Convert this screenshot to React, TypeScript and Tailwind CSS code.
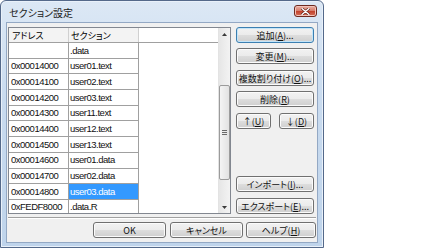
import React from 'react';
import clsx from 'clsx';

const rows: [string, string][] = [
  ['', '.data'],
  ['0x00014000', 'user01.text'],
  ['0x00014100', 'user02.text'],
  ['0x00014200', 'user03.text'],
  ['0x00014300', 'user11.text'],
  ['0x00014400', 'user12.text'],
  ['0x00014500', 'user13.text'],
  ['0x00014600', 'user01.data'],
  ['0x00014700', 'user02.data'],
  ['0x00014800', 'user03.data'],
  ['0xFEDF8000', '.data.R'],
];

const SELECTED = 9;

interface BtnProps {
  children: React.ReactNode;
  className?: string;
  primary?: boolean;
}

const Btn: React.FC<BtnProps> = ({ children, className, primary }) => (
  <div
    className={clsx(
      'flex h-[16px] shrink-0 items-center justify-center rounded-[3px] border text-[9px] leading-none text-[#111]',
      "font-['Noto_Sans_CJK_JP',sans-serif] [font-feature-settings:'palt']",
      'bg-[linear-gradient(to_bottom,#f2f2f2_0%,#ebebeb_50%,#dddddd_51%,#cfcfcf_100%)]',
      primary ? 'border-[#3c7fb1] shadow-[inset_0_0_0_1px_#c4e5f8]' : 'border-[#707070] shadow-[inset_0_0_0_1px_#fbfbfb]',
      className
    )}
  >
    {children}
  </div>
);

// underlined access key
const K: React.FC<{ c: string }> = ({ c }) => <span className="underline underline-offset-[1px]">{c}</span>;

const Arrow: React.FC<{ down?: boolean }> = ({ down }) => (
  <svg width="5" height="3" viewBox="0 0 5 3">
    <path d={down ? 'M0 0 H5 L2.5 3 Z' : 'M0 3 H5 L2.5 0 Z'} fill="#3a3a3a" />
  </svg>
);

const App: React.FC = () => {
  return (
    <div className="h-[250px] w-[434px] bg-white">
      <div className="flex h-[248px] w-[324px] flex-col rounded-t-[6px] border border-[#54698a] bg-[linear-gradient(to_bottom,#dce8f5_0%,#c9dbef_40%,#bfd4eb_100%)] shadow-[inset_0_0_0_1px_#e9f1fa]">
        {/* title bar */}
        <div className="flex h-[21px] shrink-0 items-center justify-between pl-[8px] pr-[6px]">
          <span className="pt-[2px] text-[10px] leading-none text-[#1b1b1b] font-['Noto_Sans_CJK_JP',sans-serif] [font-feature-settings:'palt']">
            セクション設定
          </span>
          <div className="mt-[-1px] flex h-[12px] w-[23px] items-center justify-center rounded-[3px] border border-[#6e2a20] bg-[linear-gradient(to_bottom,#eab0a4_0%,#d7806f_45%,#c4452f_55%,#d4705a_100%)] shadow-[inset_0_0_0_1px_#f1c2b8]">
            <svg width="9" height="7" viewBox="0 0 9 7">
              <path d="M1 0.5 L8 6.5 M8 0.5 L1 6.5" stroke="#5a1d14" strokeWidth="2.6" strokeLinecap="round" />
              <path d="M1 0.5 L8 6.5 M8 0.5 L1 6.5" stroke="#ffffff" strokeWidth="1.4" strokeLinecap="round" />
            </svg>
          </div>
        </div>

        {/* client area */}
        <div className="mx-[5px] flex h-[221px] shrink-0 flex-col border border-[#93a8c4] bg-[#f0f0f0] px-[1px] pt-[4px]">
          <div className="flex h-[187px] shrink-0">
            {/* list */}
            <div className="flex h-full w-[223px] shrink-0 border border-[#828790] bg-white">
              <div className="flex-1 overflow-hidden">
                <div className="flex h-[15px] border-b border-[#a0a0a0] text-[9px] leading-none font-['Noto_Sans_CJK_JP',sans-serif] [font-feature-settings:'palt']">
                  <div className="flex w-[60px] items-center border-r border-[#d0d0d0] bg-[#f3f3f3] pl-[3px]">アドレス</div>
                  <div className="flex w-[70px] items-center border-r border-[#d0d0d0] bg-[#f3f3f3] pl-[2px]">セクション</div>
                </div>
                {rows.map(([addr, sec], i) => (
                  <div key={i} className="flex h-[15.7px] text-[9.5px] leading-none tracking-[-0.5px] text-[#111] font-['Liberation_Sans',sans-serif]">
                    <div className="flex w-[60px] items-center border-r border-b border-[#a0a0a0] pl-[2px]">{addr}</div>
                    <div
                      className={clsx(
                        'flex w-[70px] items-center border-r border-b border-[#a0a0a0] pl-[1px]',
                        i === SELECTED && 'bg-[#3399ff] text-white'
                      )}
                    >
                      {sec}
                    </div>
                  </div>
                ))}
              </div>
              {/* scrollbar */}
              <div className="flex w-[12px] shrink-0 flex-col border-l border-[#e3e3e3] bg-[linear-gradient(to_right,#e6e6e6,#f3f3f3)]">
                <div className="flex h-[12px] items-center justify-center">
                  <Arrow />
                </div>
                <div className="mt-[45px] flex h-[95px] items-center justify-center rounded-[2px] border border-[#9b9b9b] bg-[linear-gradient(to_right,#f4f4f4,#e2e2e2)]">
                  <svg width="5" height="5" viewBox="0 0 5 5">
                    <path d="M0 0.5 H5 M0 2.5 H5 M0 4.5 H5" stroke="#6a6a6a" strokeWidth="1" />
                  </svg>
                </div>
                <div className="mt-auto flex h-[12px] items-center justify-center">
                  <Arrow down />
                </div>
              </div>
            </div>

            {/* button column */}
            <div className="ml-[5px] flex w-[78px] shrink-0 flex-col justify-between">
              <div className="flex flex-col">
                <Btn primary>追加(<K c="A" />)...</Btn>
                <Btn className="mt-[5px]">変更(<K c="M" />)...</Btn>
                <Btn className="mt-[6px]">複数割り付け(<K c="O" />)...</Btn>
                <Btn className="mt-[5px]">削除(<K c="R" />)</Btn>
                <div className="mt-[6px] flex justify-between">
                  <Btn className="w-[35px]">↑(<K c="U" />)</Btn>
                  <Btn className="w-[35px]">↓(<K c="D" />)</Btn>
                </div>
              </div>
              <div className="flex flex-col">
                <Btn>インポート(<K c="I" />)...</Btn>
                <Btn className="mt-[6px]">エクスポート(<K c="E" />)...</Btn>
              </div>
            </div>
          </div>

          {/* separator */}
          <div className="mt-[3px] h-[2px] shrink-0 border-t border-b border-t-[#a0a0a0] border-b-white" />

          {/* bottom buttons */}
          <div className="mt-[3px] flex shrink-0 justify-end">
            <Btn className="w-[73px]">OK</Btn>
            <Btn className="ml-[4px] w-[73px]">キャンセル</Btn>
            <Btn className="ml-[3px] w-[70px]">ヘルプ(<K c="H" />)</Btn>
          </div>
        </div>
      </div>
    </div>
  );
};

export default App;
